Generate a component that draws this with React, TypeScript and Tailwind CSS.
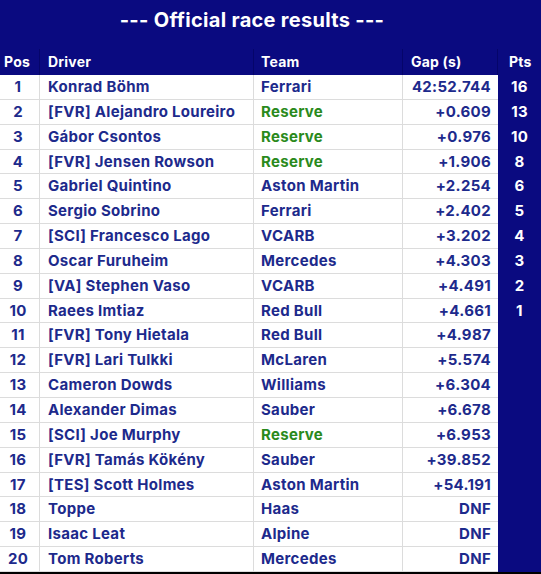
import React from 'react';

type Row = { pos: number; driver: string; team: string; gap: string; pts?: number };

const rows: Row[] = [
  { pos: 1, driver: 'Konrad Böhm', team: 'Ferrari', gap: '42:52.744', pts: 16 },
  { pos: 2, driver: '[FVR] Alejandro Loureiro', team: 'Reserve', gap: '+0.609', pts: 13 },
  { pos: 3, driver: 'Gábor Csontos', team: 'Reserve', gap: '+0.976', pts: 10 },
  { pos: 4, driver: '[FVR] Jensen Rowson', team: 'Reserve', gap: '+1.906', pts: 8 },
  { pos: 5, driver: 'Gabriel Quintino', team: 'Aston Martin', gap: '+2.254', pts: 6 },
  { pos: 6, driver: 'Sergio Sobrino', team: 'Ferrari', gap: '+2.402', pts: 5 },
  { pos: 7, driver: '[SCI] Francesco Lago', team: 'VCARB', gap: '+3.202', pts: 4 },
  { pos: 8, driver: 'Oscar Furuheim', team: 'Mercedes', gap: '+4.303', pts: 3 },
  { pos: 9, driver: '[VA] Stephen Vaso', team: 'VCARB', gap: '+4.491', pts: 2 },
  { pos: 10, driver: 'Raees Imtiaz', team: 'Red Bull', gap: '+4.661', pts: 1 },
  { pos: 11, driver: '[FVR] Tony Hietala', team: 'Red Bull', gap: '+4.987' },
  { pos: 12, driver: '[FVR] Lari Tulkki', team: 'McLaren', gap: '+5.574' },
  { pos: 13, driver: 'Cameron Dowds', team: 'Williams', gap: '+6.304' },
  { pos: 14, driver: 'Alexander Dimas', team: 'Sauber', gap: '+6.678' },
  { pos: 15, driver: '[SCI] Joe Murphy', team: 'Reserve', gap: '+6.953' },
  { pos: 16, driver: '[FVR] Tamás Kökény', team: 'Sauber', gap: '+39.852' },
  { pos: 17, driver: '[TES] Scott Holmes', team: 'Aston Martin', gap: '+54.191' },
  { pos: 18, driver: 'Toppe', team: 'Haas', gap: 'DNF' },
  { pos: 19, driver: 'Isaac Leat', team: 'Alpine', gap: 'DNF' },
  { pos: 20, driver: 'Tom Roberts', team: 'Mercedes', gap: 'DNF' },
];

export default function App() {
  return (
    <div
      className="w-[541px] h-[574px] overflow-hidden bg-[#0a0a80]"
      style={{ fontFamily: 'Inter, "Noto Sans", sans-serif' }}
    >
      {/* Title */}
      <div className="h-[49px] pt-[7px] pr-[37px] text-center text-white text-[20px] font-bold leading-[26px] tracking-[0.3px]">
        --- Official race results ---
      </div>

      {/* Header */}
      <div className="flex h-[26px] text-white text-[14px] font-bold leading-[26px] tracking-[0.2px]">
        <div className="w-[40px] shrink-0 border-r border-[#05056a] pl-[4px]">Pos</div>
        <div className="w-[214px] shrink-0 border-r border-[#05056a] pl-[8px]">Driver</div>
        <div className="w-[149px] shrink-0 border-r border-[#05056a] pl-[7px]">Team</div>
        <div className="w-[95px] shrink-0 border-r border-[#05056a] pl-[8px]">Gap (s)</div>
        <div className="w-[43px] shrink-0 pl-[11px]">Pts</div>
      </div>

      {/* Rows */}
      <div className="border-b-2 border-black">
        {rows.map((r) => (
          <div key={r.pos} className="flex h-[24.85px] text-[15px] font-bold leading-[24px] tracking-[0.3px]">
            <div className="w-[40px] shrink-0 bg-white border-r border-b border-[#dcdcdc] text-center pr-[3px] text-[#1d2a8c]">
              {r.pos}
            </div>
            <div className="w-[214px] shrink-0 bg-white border-r border-b border-[#dcdcdc] pl-[8px] text-[#1d2a8c] whitespace-nowrap">
              {r.driver}
            </div>
            <div
              className={`w-[149px] shrink-0 bg-white border-r border-b border-[#dcdcdc] pl-[7px] whitespace-nowrap ${
                r.team === 'Reserve' ? 'text-[#2a8a1c]' : 'text-[#1d2a8c]'
              }`}
            >
              {r.team}
            </div>
            <div className="w-[95px] shrink-0 bg-white border-b border-[#dcdcdc] text-right pr-[7px] text-[#1d2a8c]">
              {r.gap}
            </div>
            <div className="w-[43px] shrink-0 text-center text-white">{r.pts ?? ''}</div>
          </div>
        ))}
      </div>
    </div>
  );
}
